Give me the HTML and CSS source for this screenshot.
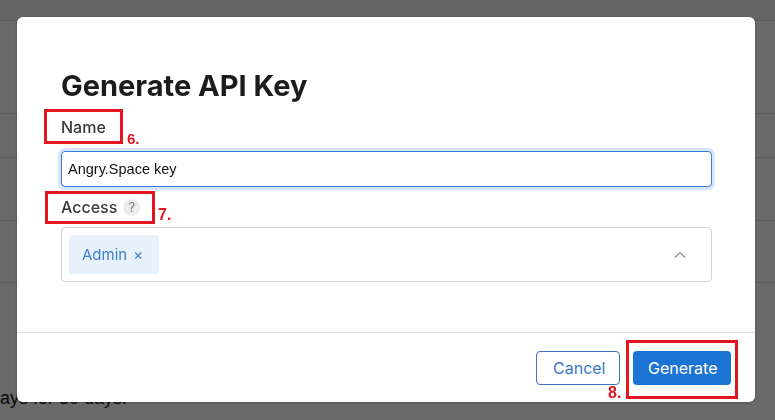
FILE: index.html
```html
<!DOCTYPE html>
<html lang="en">
<head>
    <meta charset="UTF-8">
    <meta name="viewport" content="width=device-width, initial-scale=1.0">
    <title>API Keys</title>
    <link rel="stylesheet" href="styles.css">
</head>
<body>
<div class="page">
    <div class="page-top"></div>
    <div class="page-row row-1"></div>
    <div class="page-row row-2"></div>
    <div class="page-row row-3"></div>
    <div class="page-row row-4"></div>
    <p class="page-note">ays for 30 days.</p>
</div>

<div class="overlay">
    <div class="modal">
        <div class="modal-body">
            <h1 class="modal-title">Generate API Key</h1>
            <label class="field-label label-name" for="keyName">Name</label>
            <input type="text" id="keyName" class="text-input" value="Angry.Space key">
            <div class="field-label label-access">Access <span class="hint">?</span></div>
            <div class="multi-select">
                <span class="tag">Admin<span class="tag-remove">&times;</span></span>
                <svg class="chevron" width="12" height="8" viewBox="0 0 12 8">
                    <path d="M1 6.5 L6 1.5 L11 6.5" fill="none" stroke="#8a8a8a" stroke-width="1.2"/>
                </svg>
            </div>
        </div>
        <div class="modal-footer">
            <button type="button" class="btn btn-outline">Cancel</button>
            <button type="button" class="btn btn-primary">Generate</button>
        </div>
    </div>
</div>

<!-- numbered callouts drawn over the dialog -->
<div class="callout-box box-name"></div>
<span class="callout-num num-name">6.</span>
<div class="callout-box box-access"></div>
<span class="callout-num num-access">7.</span>
<div class="callout-box box-generate"></div>
<span class="callout-num num-generate">8.</span>
</body>
</html>
```

FILE: styles.css
```css
body {
    margin: 0;
    padding: 0;
    font-family: 'Inter', 'Liberation Sans', sans-serif;
    background-color: white;
    overflow: hidden;
}
.page {
    width: 775px;
    height: 420px;
}
.page-top {
    height: 20px;
    background-color: #f1f1f1;
    border-bottom: 1px solid #e0e0e0;
}
.page-row {
    border-bottom: 1px solid #e0e0e0;
}
.row-1 { height: 92px; }
.row-2 { height: 43px; }
.row-3 { height: 62px; }
.row-4 { height: 61px; }
.page-note {
    margin: 104px 0 0 0;
    font-family: 'Liberation Sans', sans-serif;
    font-size: 18px;
    color: #1a1a1a;
    line-height: 22px;
}
.overlay {
    position: fixed;
    top: 0;
    left: 0;
    right: 0;
    bottom: 0;
    background-color: rgba(0,0,0,0.585);
    padding: 17px 20px 0 17px;
    display: flex;
    align-items: flex-start;
}
.modal {
    flex: 1;
    background-color: white;
    border-radius: 6px;
    box-shadow: 0 1px 3px rgba(0,0,0,0.25);
}
.modal-body {
    padding: 52px 43px 50px 44px;
    display: flex;
    flex-direction: column;
}
.modal-title {
    margin: 0 0 14px 0;
    font-size: 29px;
    line-height: 34px;
    font-weight: 700;
    color: #1c1c1c;
}
.field-label {
    font-size: 16px;
    line-height: 20px;
    font-weight: 500;
    color: #3a3a3a;
    display: flex;
    align-items: center;
}
.label-name {
    margin-bottom: 14px;
}
.label-access {
    margin-bottom: 10px;
}
.hint {
    width: 17px;
    height: 17px;
    margin-left: 6px;
    border-radius: 50%;
    background-color: #ececec;
    color: #777;
    font-size: 13px;
    font-weight: 400;
    display: flex;
    align-items: center;
    justify-content: center;
}
.text-input {
    height: 36px;
    margin: 0 0 10px 0;
    padding: 0 6px;
    box-sizing: border-box;
    border: 1px solid #3d7bd0;
    border-radius: 4px;
    box-shadow: 0 0 0 3px rgba(70,140,230,0.22);
    font-family: 'Liberation Sans', sans-serif;
    font-size: 14.5px;
    color: #111;
    outline: none;
}
.multi-select {
    height: 55px;
    box-sizing: border-box;
    border: 1px solid #d2d2d2;
    border-radius: 4px;
    padding: 7px;
    display: flex;
    align-items: center;
}
.tag {
    height: 39px;
    padding: 0 16px 0 13px;
    background-color: #e6f1fc;
    color: #3f7fcc;
    border-radius: 3px;
    font-size: 15px;
    display: flex;
    align-items: center;
}
.tag-remove {
    margin-left: 6px;
    font-size: 15px;
}
.chevron {
    margin-left: auto;
    margin-right: 18px;
}
.modal-footer {
    border-top: 1px solid #dcdcdc;
    padding: 18px 24px 17px 0;
    display: flex;
    justify-content: flex-end;
    gap: 13px;
}
.btn {
    height: 34px;
    border-radius: 4px;
    font-family: 'Inter', sans-serif;
    font-size: 16px;
    cursor: pointer;
    box-sizing: border-box;
}
.btn-outline {
    padding: 0 16px;
    width: 84px;
    background-color: white;
    border: 1px solid #3a77c6;
    color: #3a77c6;
}
.btn-primary {
    padding: 0 15px;
    width: 98px;
    background-color: #1b74d3;
    border: none;
    color: white;
}
.callout-box {
    position: absolute;
    border: 3px solid #e3161f;
    box-sizing: border-box;
}
.box-name {
    left: 44px;
    top: 109px;
    width: 79px;
    height: 35px;
}
.box-access {
    left: 45px;
    top: 191px;
    width: 110px;
    height: 33px;
}
.box-generate {
    left: 626px;
    top: 340px;
    width: 112px;
    height: 59px;
}
.callout-num {
    position: absolute;
    font-family: 'Liberation Sans', sans-serif;
    font-weight: 700;
    font-size: 16px;
    line-height: 1;
    color: #e3161f;
}
.num-name {
    left: 127px;
    top: 131px;
    font-size: 15px;
}
.num-access {
    left: 158px;
    top: 207px;
}
.num-generate {
    left: 608px;
    top: 385px;
}
```
